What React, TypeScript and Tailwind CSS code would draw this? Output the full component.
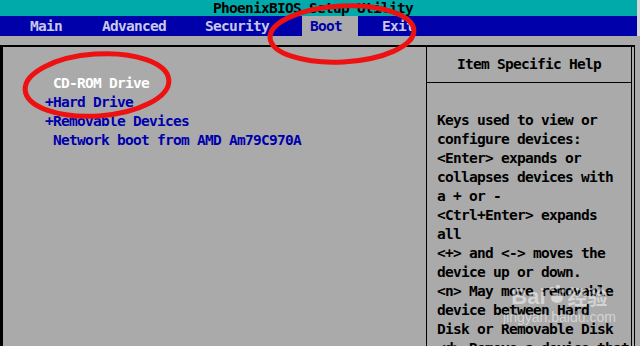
const menuItems = ['Main', 'Advanced', 'Security', 'Boot', 'Exit'];

const bootOrder = [
  { label: ' CD-ROM Drive', active: true },
  { label: '+Hard Drive', active: false },
  { label: '+Removable Devices', active: false },
  { label: ' Network boot from AMD Am79C970A', active: false },
];

const helpLines = [
  'Keys used to view or',
  'configure devices:',
  '<Enter> expands or',
  'collapses devices with',
  'a + or -',
  '<Ctrl+Enter> expands',
  'all',
  '<+> and <-> moves the',
  'device up or down.',
  '<n> May move removable',
  'device between Hard',
  'Disk or Removable Disk',
  '<d> Remove a device that',
];

// gaps before each menu entry, measured off the screen
const menuGap: Record<string, string> = {
  Main: 'ml-[30px]',
  Advanced: 'ml-[40px]',
  Security: 'ml-[39px]',
  Boot: 'ml-[33px]',
  Exit: 'ml-[24px]',
};

const App = () => {
  return (
    <div className="relative w-[640px] h-[346px] overflow-hidden bg-[#aaaaaa] font-['DejaVu_Sans_Mono',monospace] text-[14.5px] tracking-[-0.73px] font-bold">
      {/* title bar */}
      <div className="w-[637px] h-4 leading-4 bg-[#00aaaa] text-black pl-[213px] whitespace-pre">
        PhoenixBIOS Setup Utility
      </div>

      {/* menu bar */}
      <div className="w-[637px] h-5 leading-5 bg-[#0000aa] flex">
        {menuItems.map((item) =>
          item === 'Boot' ? (
            <div key={item} className={`${menuGap[item]} bg-[#aaaaaa] text-[#0000aa] pl-2 pr-4`}>
              {item}
            </div>
          ) : (
            <div key={item} className={`${menuGap[item]} text-[#c8c8e8]`}>
              {item}
            </div>
          )
        )}
      </div>

      {/* main frame */}
      <div className="mt-[9px] w-[635px] h-[301px] flex border-t-2 border-l-[3px] border-r border-black">
        <div className="w-[423px] pt-[27px] pl-[42px] leading-[19px] whitespace-pre">
          {bootOrder.map((row) => (
            <div key={row.label} className={row.active ? 'text-white' : 'text-[#0000aa]'}>
              {row.label}
            </div>
          ))}
        </div>

        <div className="w-[206px] border-l border-r border-black text-black leading-[19px] whitespace-pre">
          <div className="h-9 pt-2 text-center border-b border-black">Item Specific Help</div>
          <div className="pt-7 pl-[10px]">
            {helpLines.map((line) => (
              <div key={line}>{line}</div>
            ))}
          </div>
        </div>
      </div>

      {/* right edge strip */}
      <div className="absolute top-0 right-0 w-[3px] h-9 bg-[#d8d8d8]" />

      {/* watermark */}
      <div className="absolute left-[503px] top-[284px] flex flex-col items-center text-white/50 font-normal tracking-normal pointer-events-none">
        <div className="flex items-end gap-[2px]">
          <span className="font-['Liberation_Sans',sans-serif] font-bold text-[22px] leading-[24px]">Bai</span>
          <svg width="18" height="22" viewBox="0 0 18 22" className="mb-[3px]">
            <g fill="rgba(255,255,255,0.5)">
              <circle cx="4" cy="5" r="2.2" />
              <circle cx="10" cy="3" r="2.2" />
              <circle cx="15" cy="7" r="2" />
              <ellipse cx="9" cy="14" rx="6" ry="5" />
            </g>
          </svg>
          <span className="font-['Noto_Sans_CJK_SC',sans-serif] font-bold text-[20px] leading-[24px]">经验</span>
        </div>
        <div className="font-['Liberation_Sans',sans-serif] text-[14px] leading-4">jingyan.baidu.com</div>
      </div>

      {/* red annotation marks */}
      <svg className="absolute inset-0 pointer-events-none" width="640" height="346" viewBox="0 0 640 346">
        <ellipse cx="97" cy="85" rx="72" ry="31" fill="none" stroke="#ee1111" strokeWidth="5" transform="rotate(-4 97 85)" />
        <ellipse cx="342" cy="34" rx="72" ry="28" fill="none" stroke="#ee1111" strokeWidth="5" transform="rotate(-3 342 34)" />
      </svg>
    </div>
  );
};

export default App;
